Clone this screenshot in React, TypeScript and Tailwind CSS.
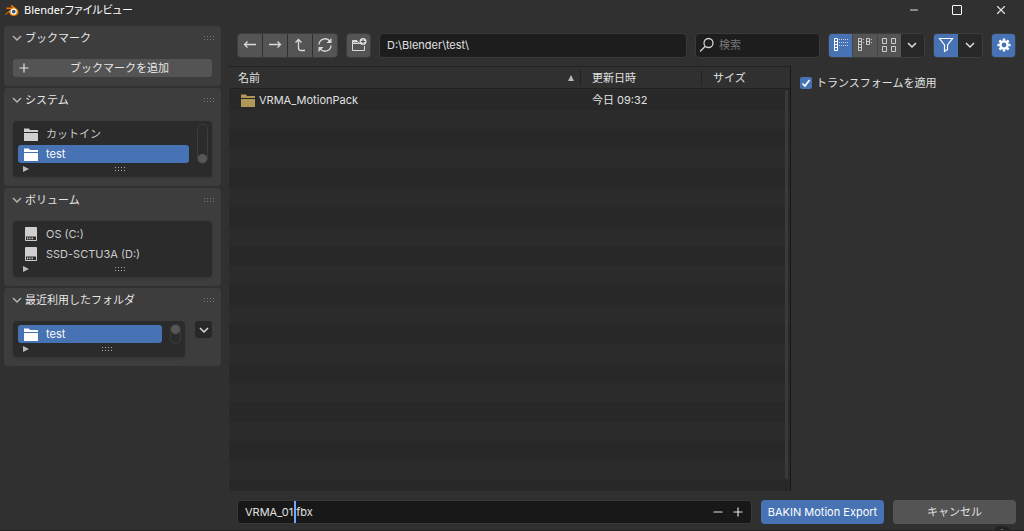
import type { ReactNode } from 'react';
import { LuMinus, LuPlus, LuX } from 'react-icons/lu';

const toolButton = 'flex h-full flex-1 items-center justify-center bg-[#545454] text-[#d9d9d9]';
const group = 'flex h-[25px] overflow-hidden rounded border border-[#3d3d3d]';

function BlenderLogo() {
  return (
    <svg viewBox="0 0 16 14" className="h-3.5 w-4 shrink-0">
      <path d="M1 11.2 7.2 6H2.4V4.6h6L6.6 3l1.100-1.200 5 4c3.400 3 1.800 7-2.600 7.200-3 .1-5-1.600-5-4L1.900 11.800Z" fill="#ea7600" />
      <circle cx="9.700" cy="8.600" r="3.100" fill="#fff" />
      <circle cx="9.700" cy="8.600" r="1.900" fill="#265787" />
    </svg>
  );
}

function Chevron({ className = '' }: { className?: string }) {
  return (
    <svg viewBox="0 0 12 12" className={`size-3 shrink-0 ${className}`} fill="none" stroke="currentColor" strokeWidth="1.500">
      <path d="m2 4 4 4 4-4" />
    </svg>
  );
}

function FolderIcon({ className }: { className: string }) {
  return (
    <svg viewBox="0 0 14 13" className={`h-[13px] w-3.5 shrink-0 ${className}`} fill="currentColor">
      <path d="M0 .5h5l1 1.500h8v2H0Z" />
      <path d="M0 5h14v8H0Z" />
    </svg>
  );
}

function DriveIcon() {
  return (
    <svg viewBox="0 0 12 14" className="mx-px h-3.5 w-3 shrink-0 text-[#cfcfcf]">
      <rect width="12" height="14" rx="1" fill="currentColor" />
      <path d="M1 9.500h10V13H1Z" fill="#2b2b2b" />
      <path d="M2 10.500h1.300v1.800H2Zm2.300 0h1.300v1.800H4.300Zm2.300 0h1.300v1.800H6.600Z" fill="currentColor" />
    </svg>
  );
}

function Grip({ className }: { className: string }) {
  return (
    <svg viewBox="0 0 11 5" className={`h-[5px] w-[11px] ${className}`} fill="currentColor">
      {[0, 3, 6, 9].map((x) => (
        <g key={x}>
          <rect x={x} y="0" width="1" height="1" />
          <rect x={x} y="3" width="1" height="1" />
        </g>
      ))}
    </svg>
  );
}

function Panel({ title, children }: { title: string; children: ReactNode }) {
  return (
    <section className="rounded bg-[#3d3d3d] pb-[9px]">
      <h2 className="mb-[9px] flex h-6 items-center pr-1.5 pl-[7px]">
        <button className="flex items-center gap-0.5 text-[#e6e6e6]">
          <Chevron className="text-[#b5b5b5]" />
          {title}
        </button>
        <Grip className="ml-auto text-[#777]" />
      </h2>
      <div className="flex items-start gap-2.5 px-[9px]">{children}</div>
    </section>
  );
}

function ListFooter() {
  return (
    <div className="flex h-2.5 items-center pl-2.5">
      <svg viewBox="0 0 6 6" className="size-1.5 text-[#b8b8b8]" fill="currentColor">
        <path d="M0 0 6 3 0 6Z" />
      </svg>
      <Grip className="mx-auto text-[#aaa]" />
    </div>
  );
}

function ListBox({ items, scroll }: { items: { name: string; icon: ReactNode; active?: boolean }[]; scroll?: 'top' | 'bottom' }) {
  return (
    <div className="min-w-0 flex-1 rounded bg-[#2b2b2b] pt-[3px] pb-[3px] shadow-sm">
      <div className="flex gap-2 pr-1 pl-[5px]">
        <ul className="flex-1">
          {items.map((item) => (
            <li key={item.name} className="flex h-5 items-center">
              <button
                className={`flex h-[18px] w-full items-center gap-2 rounded-[3px] px-1.5 ${
                  item.active ? 'bg-[#4772b3] text-white' : 'text-[#cccccc]'
                }`}
              >
                {item.icon}
                {item.name}
              </button>
            </li>
          ))}
        </ul>
        {scroll && (
          <div
            className={`flex w-[11px] flex-col rounded-full border border-[#3d3d3d] ${
              scroll === 'bottom' ? 'justify-end' : 'justify-start'
            }`}
          >
            <div className="size-[9px] rounded-full bg-[#575757]" />
          </div>
        )}
      </div>
      <ListFooter />
    </div>
  );
}

export default function App() {
  return (
    <div className="relative flex min-h-screen flex-col overflow-hidden border-b border-[#222] bg-[#303030] font-[Inter,'Noto_Sans_CJK_JP',sans-serif] text-[11px] leading-4 text-[#e0e0e0]">
      {/* Title bar */}
      <header className="flex h-5 items-center gap-1 pr-4 pl-1">
        <BlenderLogo />
        <h1 className="font-['Noto_Sans','Noto_Sans_CJK_JP',sans-serif] text-[11px] text-white [font-feature-settings:'palt']">
          Blenderファイルビュー
        </h1>
        <div className="ml-auto flex items-center gap-8">
          <button aria-label="最小化">
            <LuMinus className="size-3" />
          </button>
          <button aria-label="最大化" className="size-2.5 rounded-[1px] border border-white" />
          <button aria-label="閉じる">
            <LuX className="size-3.5" />
          </button>
        </div>
      </header>

      <div className="flex flex-1">
        {/* Sidebar */}
        <aside className="flex w-[229px] shrink-0 flex-col gap-0.5 pt-1.5 pr-2 pl-1">
          <Panel title="ブックマーク">
            <button className="flex h-[18px] w-full items-center rounded-[3px] bg-[#545454] px-1 text-[#e6e6e6]">
              <LuPlus className="size-3.5" />
              <span className="flex-1">ブックマークを追加</span>
            </button>
          </Panel>
          <Panel title="システム">
            <ListBox
              scroll="bottom"
              items={[
                { name: 'カットイン', icon: <FolderIcon className="text-[#cfcfcf]" /> },
                { name: 'test', icon: <FolderIcon className="text-white" />, active: true },
              ]}
            />
          </Panel>
          <Panel title="ボリューム">
            <ListBox
              items={[
                { name: 'OS (C:)', icon: <DriveIcon /> },
                { name: 'SSD-SCTU3A (D:)', icon: <DriveIcon /> },
              ]}
            />
          </Panel>
          <Panel title="最近利用したフォルダ">
            <ListBox scroll="top" items={[{ name: 'test', icon: <FolderIcon className="text-white" />, active: true }]} />
            <button
              aria-label="フォルダメニュー"
              className="flex size-[17px] items-center justify-center rounded-[3px] bg-[#282828] text-[#d9d9d9]"
            >
              <Chevron />
            </button>
          </Panel>
        </aside>

        <main className="flex min-w-0 flex-1 flex-col">
          {/* Toolbar */}
          <div className="flex h-[46px] items-center gap-2 pt-1 pr-2 pl-2">
            <div className={`${group} w-[101px] gap-px`}>
              <button aria-label="戻る" className={toolButton}>
                <svg viewBox="0 0 16 16" className="size-4" fill="none" stroke="currentColor" strokeWidth="1.300">
                  <path d="M14 7.500H2.500M5.500 4.500l-3 3 3 3" />
                </svg>
              </button>
              <button aria-label="進む" className={toolButton}>
                <svg viewBox="0 0 16 16" className="size-4" fill="none" stroke="currentColor" strokeWidth="1.300">
                  <path d="M2 7.500h11.500M10.500 4.500l3 3-3 3" />
                </svg>
              </button>
              <button aria-label="親フォルダ" className={toolButton}>
                <svg viewBox="0 0 16 16" className="size-4" fill="none" stroke="currentColor" strokeWidth="1.300">
                  <path d="m3.500 5.500 3-3 3 3M6.500 3v8q0 2.500 2.500 2.500h4" />
                </svg>
              </button>
              <button aria-label="更新" className={toolButton}>
                <svg viewBox="0 0 16 16" className="size-4" fill="none" stroke="currentColor" strokeWidth="1.300">
                  <path d="M2 7.500a6 6 0 0 1 11-3M14 8.500a6 6 0 0 1-11 3" />
                  <path d="M14.500 1v5h-5ZM1.500 15v-5h5Z" fill="currentColor" stroke="none" />
                </svg>
              </button>
            </div>
            <div className={`${group} w-[25px]`}>
              <button aria-label="新規フォルダ" className={toolButton}>
                <svg viewBox="0 0 16 16" className="size-4" fill="none" stroke="currentColor">
                  <path d="M1.500 6.500h8M8 5.500H7L6 3.500H1.500v10h12V9" />
                  <path d="M1 3.500h5v2H1Z" fill="currentColor" stroke="none" />
                  <circle cx="12" cy="4.500" r="3.500" fill="currentColor" stroke="none" />
                  <path d="M12 2.500v4M10 4.500h4" stroke="#444" />
                </svg>
              </button>
            </div>
            <input
              aria-label="フォルダのパス"
              defaultValue="D:\Blender\test\"
              className="h-[25px] min-w-0 flex-1 rounded border border-[#393939] bg-[#1d1d1d] px-[7px] outline-none"
            />
            <label className="flex h-[25px] w-[125px] items-center gap-1 rounded border border-[#393939] bg-[#1d1d1d] px-[3px]">
              <svg viewBox="0 0 16 16" className="size-4 shrink-0" fill="none" stroke="#d0d0d0" strokeWidth="1.300">
                <circle cx="9.500" cy="6" r="4.500" />
                <path d="M6.300 9.200 1 14.500" />
              </svg>
              <input aria-label="検索" placeholder="検索" className="w-full min-w-0 outline-none placeholder:text-[#777]" />
            </label>
            <div className={`${group} w-[97px]`}>
              <button aria-label="縦リスト" className="flex flex-1 items-center justify-center bg-[#4772b3] text-white">
                <svg viewBox="0 0 16 16" className="size-4" fill="none" stroke="currentColor">
                  <path d="M1.500 1.500h3v12h-3ZM1.500 4.500h3M1.500 7.500h3M1.500 10.500h3" />
                  <path d="M6 2.500h9M6 5.500h9M6 8.500h9" strokeDasharray="1 1" opacity=".7" />
                </svg>
              </button>
              <button aria-label="横リスト" className="flex flex-1 items-center justify-center border-l border-[#444] bg-[#545454] text-[#ccc]">
                <svg viewBox="0 0 16 16" className="size-4" fill="none" stroke="currentColor">
                  <path d="M1.500 1.500h3v12h-3ZM1.500 4.500h3M1.500 7.500h3M1.500 10.500h3M9.500 1.500h3v6h-3ZM9.500 4.500h3" />
                  <path d="M6.500 2v6M14.500 2v6" strokeDasharray="1 2" />
                </svg>
              </button>
              <button aria-label="サムネイル" className="flex flex-1 items-center justify-center border-l border-[#444] bg-[#545454] text-[#ccc]">
                <svg viewBox="0 0 16 16" className="size-4" fill="none" stroke="currentColor">
                  <path d="M1.500 1.500h4v5h-4ZM10.500 1.500h4v5h-4ZM1.500 9.500h4v5h-4ZM10.500 9.500h4v5h-4Z" />
                </svg>
              </button>
              <button aria-label="表示設定" className="flex flex-1 items-center justify-center bg-[#282828]">
                <Chevron />
              </button>
            </div>
            <div className={`${group} w-[50px]`}>
              <button aria-label="フィルター" className="flex flex-1 items-center justify-center bg-[#4772b3] text-white">
                <svg viewBox="0 0 16 16" className="size-4" fill="none" stroke="currentColor" strokeWidth="1.200">
                  <path d="M1.500 1.500h13L9.500 8v4.500l-3 2V8Z" />
                </svg>
              </button>
              <button aria-label="フィルター設定" className="flex flex-1 items-center justify-center bg-[#282828]">
                <Chevron />
              </button>
            </div>
            <div className={group}>
              <button aria-label="オプション" className="flex w-[23px] items-center justify-center bg-[#4772b3] text-white">
                <svg viewBox="0 0 16 16" className="size-4" fill="none" stroke="currentColor">
                  <circle cx="8" cy="8" r="3.600" strokeWidth="2.400" />
                  <path d="M8 1.500v2M8 12.500v2M1.500 8h2M12.500 8h2M3.400 3.400l1.400 1.400M11.200 11.200l1.400 1.400M3.400 12.600l1.400-1.400M11.200 4.800l1.400-1.400" strokeWidth="2.400" />
                </svg>
              </button>
            </div>
          </div>

          <div className="flex flex-1">
            {/* File list */}
            <div className="relative flex min-w-0 flex-1 border-r border-[#181818] bg-[repeating-linear-gradient(#282828_0_5px,#2b2b2b_5px_24px,#282828_24px_39px)]">
              <table className="h-fit w-full table-fixed text-left">
                <thead>
                  <tr className="h-[22px] border-y border-[#222] bg-[#303030]">
                    <th className="pl-[9px] font-normal">
                      <div className="flex items-center justify-between border-r border-[#222] pr-1.5">
                        名前
                        <svg viewBox="0 0 6 6" className="size-1.5 text-[#b8b8b8]" fill="currentColor">
                          <path d="M0 6 3 0l3 6Z" />
                        </svg>
                      </div>
                    </th>
                    <th className="w-[121px] pl-[11px] font-normal">
                      <div className="border-r border-[#222]">更新日時</div>
                    </th>
                    <th className="w-[88px] pl-[11px] font-normal">サイズ</th>
                  </tr>
                </thead>
                <tbody>
                  <tr className="h-[23px]">
                    <td className="pl-3">
                      <div className="flex items-center gap-1">
                        <FolderIcon className="text-[#b0975a]" />
                        VRMA_MotionPack
                      </div>
                    </td>
                    <td className="pl-[11px]">今日 09:32</td>
                    <td />
                  </tr>
                </tbody>
              </table>
              <div className="absolute top-6 right-0.5 bottom-3 w-[3px] rounded-full bg-[#3a3a3a]" />
            </div>

            {/* Export options */}
            <div className="w-[233px] shrink-0 px-[9px] pt-[9px]">
              <label className="flex items-center gap-1">
                <span className="grid size-3 place-items-center">
                  <input
                    type="checkbox"
                    defaultChecked
                    className="peer col-start-1 row-start-1 size-3 appearance-none rounded-xs bg-[#545454] checked:bg-[#4772b3]"
                  />
                  <svg viewBox="0 0 12 12" className="pointer-events-none col-start-1 row-start-1 hidden size-3 peer-checked:block" fill="none" stroke="#fff" strokeWidth="1.600">
                    <path d="m2.500 6.500 2.500 2.500 4.500-6" />
                  </svg>
                </span>
                トランスフォームを適用
              </label>
            </div>
          </div>

          {/* File name and actions */}
          <footer className="flex items-center gap-[9px] px-2 pt-[9px] pb-1.5">
            <div className="relative flex h-6 flex-1 items-center rounded border border-[#393939] bg-[#181818] pr-1.5 pl-[7px]">
              <input aria-label="ファイル名" defaultValue="VRMA_01.fbx" className="min-w-0 flex-1 caret-transparent outline-none" />
              {/* Text cursor */}
              <span className="absolute inset-y-0 left-14 w-0.5 bg-[#71a8ff]" />
              <button aria-label="番号を減らす" className="mr-1.5">
                <LuMinus className="size-3.5" />
              </button>
              <button aria-label="番号を増やす">
                <LuPlus className="size-3.5" />
              </button>
            </div>
            <button className="h-6 w-[123px] rounded bg-[#4772b3] text-white">BAKIN Motion Export</button>
            <button className="h-6 w-[123px] rounded bg-[#545454]">キャンセル</button>
          </footer>
        </main>
      </div>

      {/* Collapsed region handle */}
      <div className="absolute right-3.5 -bottom-2 flex h-3 w-4 justify-center rounded-full bg-[#222] text-[#aaa]">
        <Chevron className="rotate-180" />
      </div>
    </div>
  );
}
